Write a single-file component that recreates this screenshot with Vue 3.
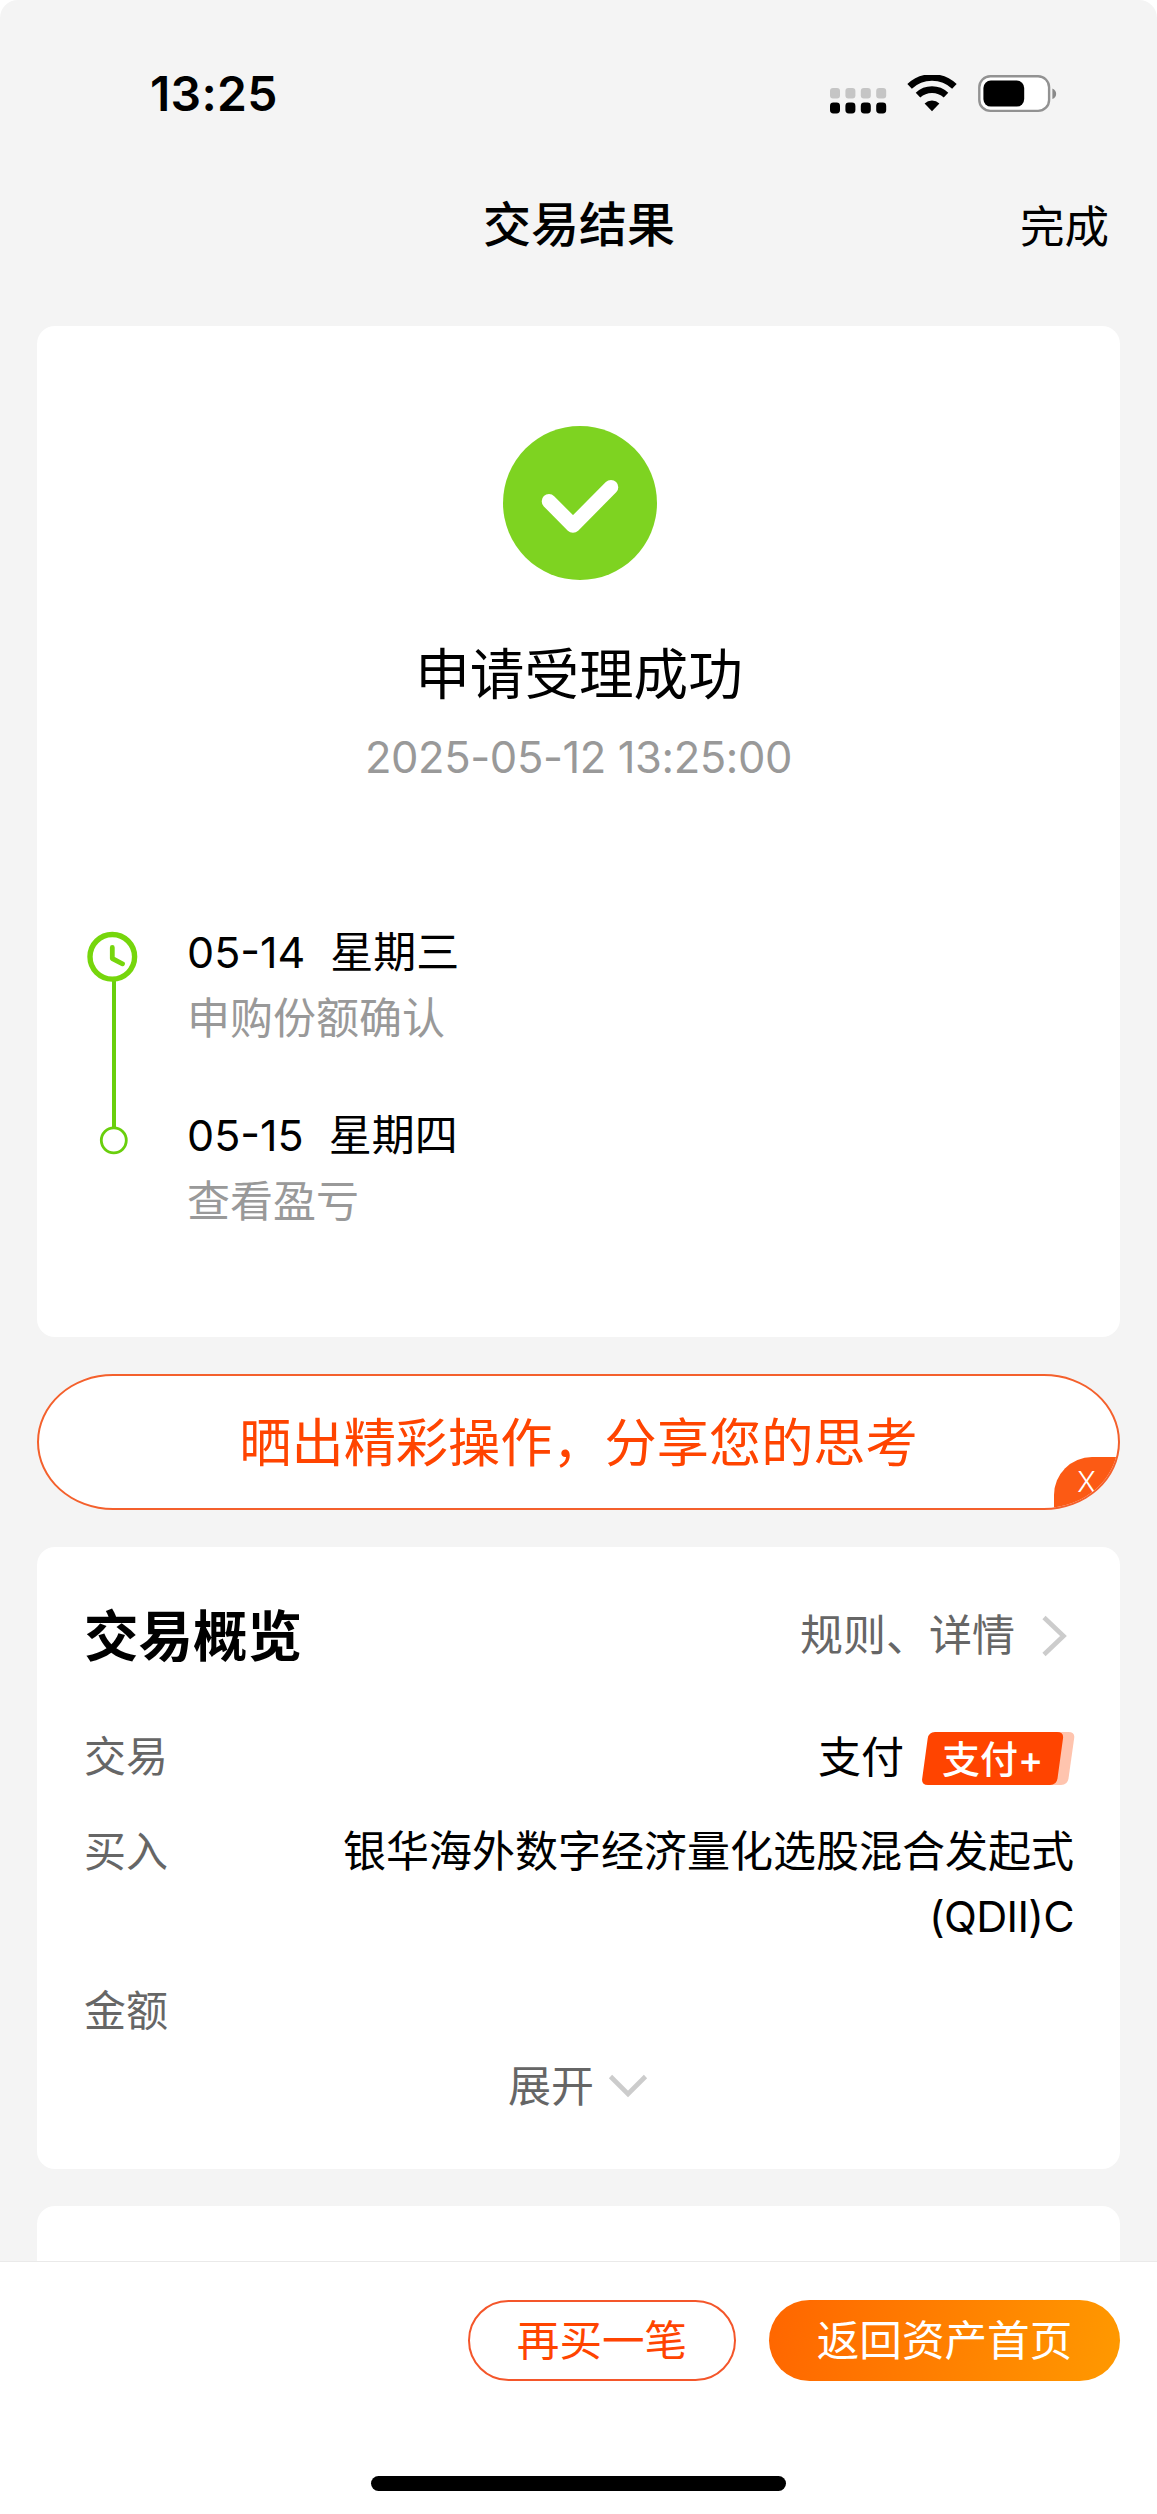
<script setup>
const steps = [
  { date: '05-14', day: '星期三', note: '申购份额确认' },
  { date: '05-15', day: '星期四', note: '查看盈亏' },
]
const dots = [0, 1, 2, 3]
</script>

<template>
  <div class="screen">
    <header class="status">
      <span class="time">13:25</span>
      <div class="indicators">
        <svg class="signal" width="57" height="26" viewBox="0 0 57 26">
          <g v-for="i in dots" :key="i">
            <rect :x="i * 15.4" y="0" width="10" height="10.4" rx="3" fill="#c5c5c5" />
            <rect :x="i * 15.4" y="14.6" width="10" height="10.8" rx="3.4" fill="#000" />
          </g>
        </svg>
        <svg class="wifi" width="50" height="37" viewBox="0 0 50 37">
          <g fill="none" stroke="#000" stroke-width="6.6">
            <path d="M2.6 11.4A32.6 32.6 0 0 1 47.4 11.4" />
            <path d="M11 20.2A20.4 20.4 0 0 1 39 20.2" />
          </g>
          <path d="M17.6 28.5a10.8 10.8 0 0 1 14.8 0L25 36.2z" fill="#000" />
        </svg>
        <svg class="battery" width="80" height="38" viewBox="0 0 80 38">
          <rect x="1.3" y="1.3" width="69.8" height="34.6" rx="11" fill="#fff" stroke="#929292" stroke-width="2.4" />
          <rect x="5.4" y="5.6" width="40.8" height="26" rx="7.5" fill="#000" />
          <path d="M74.4 13.4c5 2 5 8.600 0 10.600z" fill="#8a8a8a" />
        </svg>
      </div>
    </header>

    <nav class="navbar">
      <h1>交易结果</h1>
      <a class="done">完成</a>
    </nav>

    <main>
      <section class="card result">
        <svg class="success" width="154" height="154" viewBox="0 0 154 154">
          <circle cx="77" cy="77" r="77" fill="#7ed321" />
          <path d="M46 75.300L70 99.500L108 61.200" fill="none" stroke="#fff" stroke-width="14.600" stroke-linecap="round" stroke-linejoin="round" />
        </svg>
        <h2>申请受理成功</h2>
        <p class="stamp">2025-05-12 13:25:00</p>
        <div class="timeline">
          <svg width="102" height="240" viewBox="0 0 102 240" fill="none">
            <path d="M29 58V206" stroke="#69cf0c" stroke-width="4" />
            <circle cx="27.300" cy="34.800" r="22.300" stroke="#76d60c" stroke-width="5.400" />
            <path d="M27.300 25.500V36.500L37.500 41.800" stroke="#76d60c" stroke-width="4.800" stroke-linecap="round" stroke-linejoin="round" />
            <circle cx="28.800" cy="218.300" r="12.500" fill="#fff" stroke="#69cf0c" stroke-width="2.800" />
          </svg>
          <ol>
            <li v-for="s in steps" :key="s.date">
              <div class="when"><span class="date">{{ s.date }}</span><span>{{ s.day }}</span></div>
              <div class="note">{{ s.note }}</div>
            </li>
          </ol>
        </div>
      </section>

      <div class="share">
        <span>晒出精彩操作，分享您的思考</span>
        <b class="close">X</b>
      </div>

      <section class="card overview">
        <div class="head">
          <h3>交易概览</h3>
          <a class="rules">
            <span>规则、详情</span>
            <svg width="28" height="42" viewBox="0 0 28 42"><path d="M3 2.500L22.500 21L3 39.500" fill="none" stroke="#ccc" stroke-width="4.600" /></svg>
          </a>
        </div>
        <dl>
          <div class="row pay">
            <dt>交易</dt>
            <dd>
              支付
              <span class="tag">
                <svg width="153" height="53" viewBox="0 0 153 53">
                  <path d="M130 0H146.500Q153 0 152.200 6L146.500 46.500Q145.500 53 139 53H125z" fill="#ffc4ae" />
                  <path d="M13 0H135Q142 0 141 6.500L135.500 46.500Q134.500 53 128 53H6Q-0.800 53 .2 46.500L5.700 6.500Q6.700 0 13 0z" fill="#ff4400" />
                </svg>
                <em>支付+</em>
              </span>
            </dd>
          </div>
          <div class="row fund">
            <dt>买入</dt>
            <dd>银华海外数字经济量化选股混合发起式<br /><span class="code">(QDII)C</span></dd>
          </div>
          <div class="row">
            <dt>金额</dt>
            <dd></dd>
          </div>
        </dl>
        <a class="expand">
          展开
          <svg width="40" height="24" viewBox="0 0 40 24"><path d="M2.500 2.500L20 20L37.500 2.500" fill="none" stroke="#ccc" stroke-width="4.600" /></svg>
        </a>
      </section>

      <section class="card next"></section>
    </main>

    <footer>
      <div class="actions">
        <button class="again">再买一笔</button>
        <button class="home">返回资产首页</button>
      </div>
      <div class="indicator"></div>
    </footer>
  </div>
</template>

<style>
body {
  margin: 0;
  background: #fff;
}
</style>

<style scoped>
* {
  box-sizing: border-box;
}
h1, h2, h3, p, ol, dl, dd {
  margin: 0;
  padding: 0;
}
svg {
  display: block;
  flex: none;
}
.screen {
  display: flex;
  flex-direction: column;
  width: 1157px;
  height: 2514px;
  overflow: hidden;
  border-radius: 18px 18px 0 0;
  background: #f4f4f4;
  color: #000;
  font: 43px/60px Inter, "Noto Sans CJK SC", sans-serif;
}
.status {
  flex: none;
  display: flex;
  justify-content: space-between;
  height: 160px;
  padding: 64px 99px 0 150px;
}
.time {
  font-size: 48px;
  font-weight: 600;
  letter-spacing: 0.300px;
}
.indicators {
  display: flex;
  align-items: flex-start;
  padding-top: 11px;
}
.signal {
  margin: 13px 20px 0 0;
}
.wifi {
  margin-right: 21px;
}
.navbar {
  flex: none;
  display: grid;
  grid-template-columns: 1fr auto 1fr;
  align-items: center;
  height: 166px;
  padding: 0 48px 37px 49px;
}
h1 {
  grid-column: 2;
  font-size: 48px;
  font-weight: 500;
}
.done {
  justify-self: end;
  font-size: 44.500px;
  padding-top: 5px;
}
main {
  flex: 1;
  min-height: 0;
  overflow: hidden;
  display: flex;
  flex-direction: column;
  gap: 37px;
  padding: 0 37px;
}
.card {
  flex: none;
  background: #fff;
  border-radius: 18px;
}
.result {
  height: 1011px;
  padding: 100px 48px 0;
  display: flex;
  flex-direction: column;
  align-items: center;
}
.success {
  margin-left: 2px;
}
h2 {
  margin-top: 64px;
  padding-left: 1px;
  font-size: 54.600px;
  font-weight: 400;
}
.stamp {
  margin-top: 28px;
  line-height: 50px;
  font-size: 43.500px;
  letter-spacing: -0.400px;
  color: #999;
}
.timeline {
  align-self: stretch;
  display: flex;
  margin-top: 140px;
}
ol {
  list-style: none;
}
li + li {
  margin-top: 57px;
}
.when {
  display: flex;
  gap: 25px;
}
.note {
  margin-top: 6px;
  color: #999;
}
.share {
  flex: none;
  position: relative;
  height: 136px;
  border: 2px solid #f4602c;
  border-radius: 76px / 68px;
  overflow: hidden;
  background: #fff;
  color: #ff4400;
  font-size: 52.200px;
  line-height: 135px;
  text-align: center;
}
.close {
  position: absolute;
  right: 0;
  bottom: 0;
  width: 64px;
  height: 51px;
  padding-left: 1px;
  border-top-left-radius: 38px;
  background: #fc5a14;
  color: #fff;
  font-size: 28px;
  font-weight: 300;
  line-height: 51px;
}
.overview {
  height: 622px;
  padding: 56px 46px 0 47px;
}
.head {
  display: flex;
  justify-content: space-between;
  align-items: center;
  height: 66px;
}
h3 {
  font-size: 54.500px;
  font-weight: 700;
}
.rules {
  display: flex;
  align-items: center;
  gap: 26px;
  padding-right: 5px;
  font-size: 43px;
  color: #666;
}
.rules span {
  margin-top: -3px;
}
dl {
  margin-top: 58px;
}
.row {
  display: flex;
  justify-content: space-between;
}
.row + .row {
  margin-top: 32px;
}
dt {
  font-size: 42px;
  color: #666;
}
dd {
  text-align: right;
}
.pay dd {
  display: flex;
  align-items: center;
  gap: 18px;
  margin-right: -1px;
}
.tag {
  display: grid;
  margin-top: 5px;
}
.tag > * {
  grid-area: 1 / 1;
}
.tag em {
  padding-left: 20px;
  color: #fff;
  font-size: 38px;
  font-weight: 500;
  font-style: normal;
  line-height: 55px;
  text-align: left;
}
.fund {
  line-height: 65px;
}
.code {
  letter-spacing: -0.700px;
}
.expand {
  display: flex;
  align-items: center;
  justify-content: center;
  gap: 14px;
  margin-top: 15px;
  padding-right: 2px;
  color: #666;
}
.next {
  height: 200px;
}
footer {
  flex: none;
  height: 253px;
  border-top: 1px solid #eaeaea;
  background: #fff;
}
.actions {
  display: flex;
  justify-content: flex-end;
  gap: 33px;
  padding: 38px 37px 0 0;
}
button {
  height: 81px;
  padding: 1px 0 0;
  border: 0;
  border-radius: 42px;
  font: inherit;
  font-size: 42.600px;
}
.again {
  width: 268px;
  border: 2px solid #f4562a;
  background: #fff;
  color: #ff4400;
}
.home {
  width: 351px;
  background: linear-gradient(100deg, #ff6600, #ff9900);
  color: #fff;
}
.indicator {
  width: 415px;
  height: 15px;
  margin: 95px auto 0;
  border-radius: 8px;
  background: #000;
}
</style>
